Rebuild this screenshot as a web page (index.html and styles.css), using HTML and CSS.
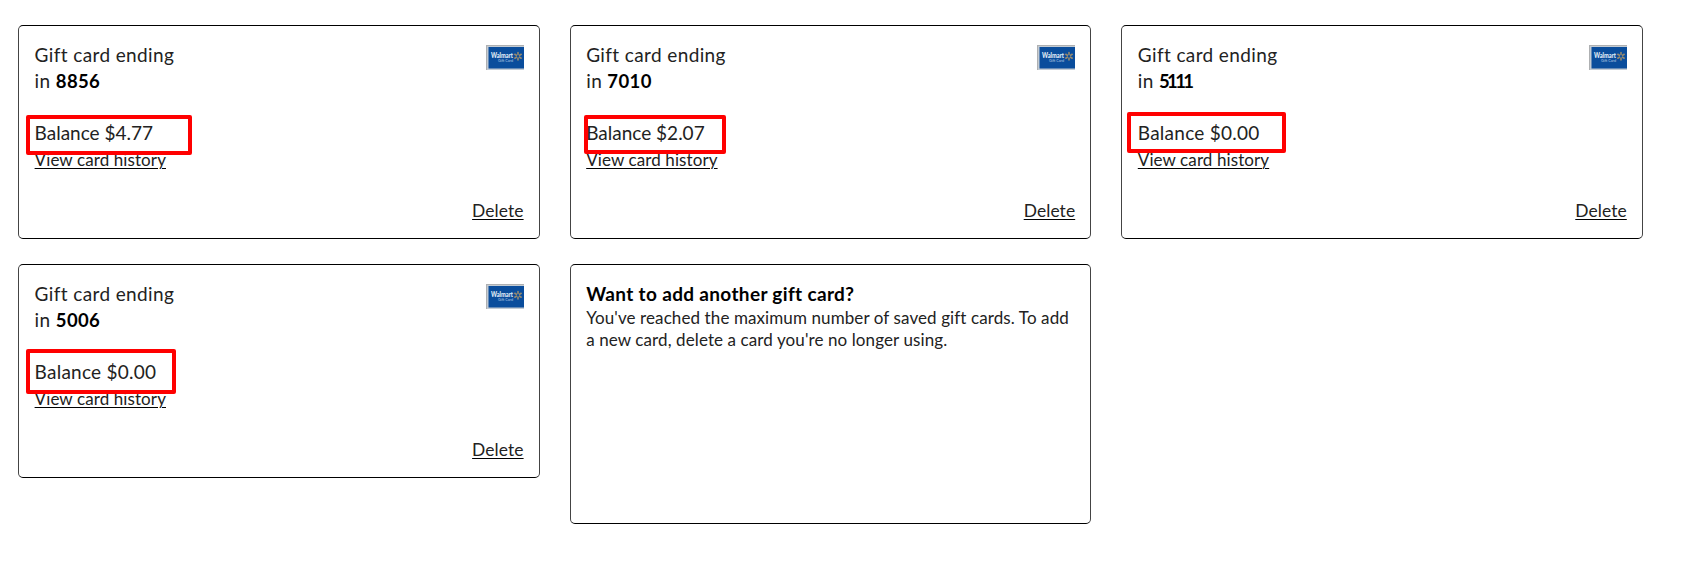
FILE: index.html
```
<!DOCTYPE html>
<html lang="en">
<head>
    <meta charset="UTF-8">
    <meta name="viewport" content="width=device-width, initial-scale=1.0">
    <title>Gift cards</title>
    <link rel="stylesheet" href="styles.css">
</head>
<body>

<!-- Card art shared by every gift card -->
<svg width="0" height="0" class="sprite">
    <symbol id="gift-art" viewBox="0 0 38 25">
        <rect width="38" height="25" fill="#c3cbd3"/>
        <rect width="38" height="1" fill="#aeb0b2"/>
        <rect width="1" height="25" fill="#aeb0b2"/>
        <rect x="2.5" y="2" width="35.5" height="21.5" fill="#0a4d9c"/>
        <text x="5" y="13" font-size="6.5" font-weight="900" fill="#e4edf7" textLength="22" lengthAdjust="spacingAndGlyphs">Walmart</text>
        <text x="12" y="17" font-size="4.5" fill="#b5cbe4" textLength="15" lengthAdjust="spacingAndGlyphs">Gift Card</text>
        <g stroke="#968a70" stroke-width="1.6" stroke-linecap="round">
            <path d="M32 7.5v2M32 13v2M28.8 9.3l1.6 1M33.6 12.2l1.6 1M35.2 9.3l-1.6 1M30.4 12.2l-1.6 1"/>
        </g>
    </symbol>
</svg>

<div class="cards">
    <div class="card">
        <div class="card-top">
            <div class="card-name">Gift card ending<br>in <strong>8856</strong></div>
            <svg class="card-art"><use href="#gift-art"/></svg>
        </div>
        <div class="balance">Balance $4.77<div class="mark mark-8856"></div></div>
        <a class="history" href="#">View card history</a>
        <a class="delete" href="#">Delete</a>
    </div>

    <div class="card">
        <div class="card-top">
            <div class="card-name">Gift card ending<br>in <strong>7010</strong></div>
            <svg class="card-art"><use href="#gift-art"/></svg>
        </div>
        <div class="balance">Balance $2.07<div class="mark mark-7010"></div></div>
        <a class="history" href="#">View card history</a>
        <a class="delete" href="#">Delete</a>
    </div>

    <div class="card">
        <div class="card-top">
            <div class="card-name">Gift card ending<br>in <strong class="narrow">5111</strong></div>
            <svg class="card-art"><use href="#gift-art"/></svg>
        </div>
        <div class="balance zero">Balance $0.00<div class="mark mark-5111"></div></div>
        <a class="history" href="#">View card history</a>
        <a class="delete" href="#">Delete</a>
    </div>

    <div class="card">
        <div class="card-top">
            <div class="card-name">Gift card ending<br>in <strong>5006</strong></div>
            <svg class="card-art"><use href="#gift-art"/></svg>
        </div>
        <div class="balance zero">Balance $0.00<div class="mark mark-5006"></div></div>
        <a class="history" href="#">View card history</a>
        <a class="delete" href="#">Delete</a>
    </div>

    <div class="card card-add">
        <h2>Want to add another gift card?</h2>
        <p>You've reached the maximum number of saved gift cards. To add a new card, delete a card you're no longer using.</p>
    </div>
</div>

</body>
</html>
```
FILE: styles.css
```
body {
    font-family: Lato, sans-serif;
    background-color: #fff;
    margin: 0;
    color: #222;
}

.sprite {
    display: none;
}

.cards {
    display: grid;
    grid-template-columns: repeat(3, 521.6px);
    gap: 25px 30px;
    align-items: start;
    padding: 25px 0 0 18px;
}

.card {
    box-sizing: border-box;
    display: flex;
    flex-direction: column;
    align-items: flex-start;
    height: 214px;
    padding: 16px 15px 14px 15.6px;
    border: 1px solid #000;
    border-left-color: #444;
    border-right-color: #444;
    border-radius: 5px;
    font-size: 19px;
    line-height: 26px;
}

.card-top {
    display: flex;
    justify-content: space-between;
    align-self: stretch;
    margin-bottom: 26px;
}

.card-name {
    letter-spacing: 0.38px;
}

.card-name strong {
    font-weight: 700;
    font-size: 18.5px;
    color: #000;
}

.card-name .narrow {
    letter-spacing: -2.6px;
}

.card-art {
    width: 38px;
    height: 25px;
    margin-top: 3px;
}

.balance {
    position: relative;
}

.zero {
    letter-spacing: 0.25px;
}

.history, .delete {
    font-size: 17px;
    letter-spacing: 0.1px;
    color: #222;
    text-decoration: underline #000 1px;
    text-underline-offset: 2px;
}

.history {
    margin-top: 1px;
}

.delete {
    margin-top: auto;
    align-self: flex-end;
    font-size: 17.4px;
}

/* red outlines around the balances */
.mark {
    position: absolute;
    box-sizing: border-box;
    border: 4px solid #f00;
    border-radius: 2px;
}

.mark-8856 {
    left: -9px;
    top: -5px;
    width: 166px;
    height: 40px;
}

.mark-7010 {
    left: -2.6px;
    top: -5px;
    width: 142px;
    height: 39px;
}

.mark-5111 {
    left: -10.6px;
    top: -8px;
    width: 159px;
    height: 41px;
}

.mark-5006 {
    left: -9px;
    top: -10px;
    width: 150px;
    height: 45px;
}

.card-add {
    height: 260px;
}

.card-add h2 {
    margin: 0;
    font-size: 19px;
    font-weight: 700;
    letter-spacing: 0.34px;
    color: #000;
}

.card-add p {
    margin: 0;
    font-size: 17px;
    letter-spacing: 0.1px;
    line-height: 22px;
}
```
